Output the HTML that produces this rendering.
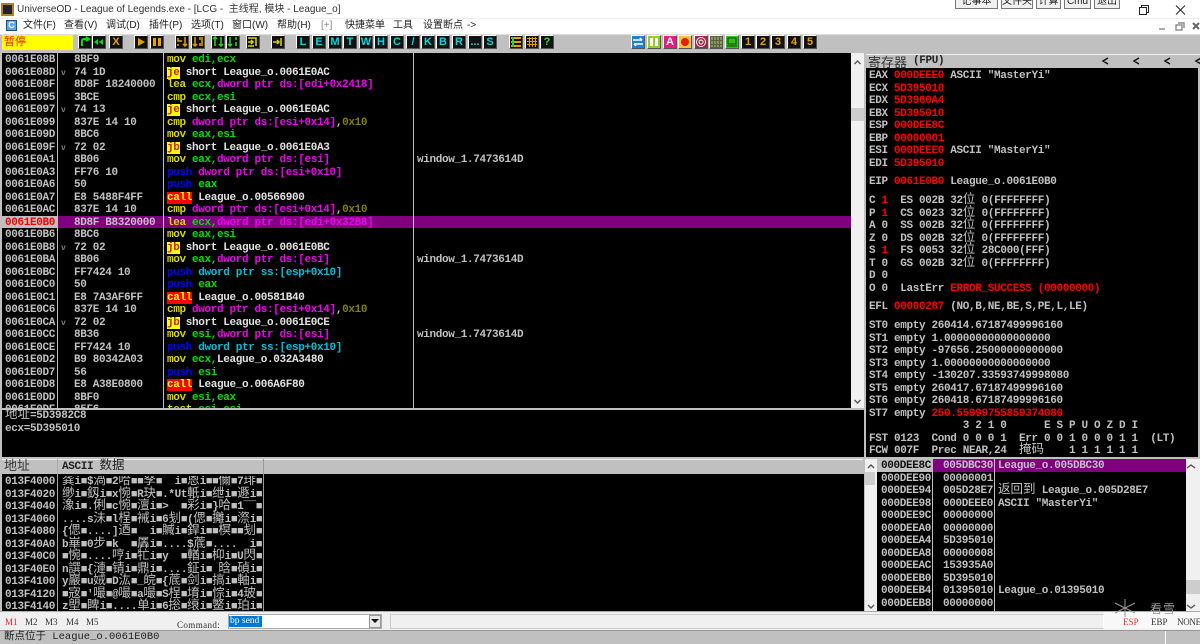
<!DOCTYPE html>
<html><head><meta charset="utf-8"><style>
*{margin:0;padding:0;box-sizing:border-box}
html,body{width:1200px;height:644px;overflow:hidden;background:#c0c0c0}
body{position:relative;font-family:"Liberation Sans","Noto Sans CJK SC",sans-serif}
div{position:absolute}
.t{font:bold 11px/12.5px "Liberation Mono","Noto Sans CJK SC",monospace;letter-spacing:-.35px;color:#c0c0c0;white-space:pre}
.k{background:#000}
.m{color:#d8d800}.g{color:#00e000}.p{color:#f000f0}.o{color:#808000}.u{color:#0000ff}.c{color:#00c0d8}.w{color:#e0e0e0}.r{color:#ff0000}
.j{background:#ffff00;color:#d02000}.a{background:#ff0000;color:#ffff00}
u{text-decoration:none;font-weight:normal;font-size:12.5px;line-height:10px;letter-spacing:0}
.hd{font:11px/14px "Liberation Mono","Noto Sans CJK SC",monospace;color:#222}
.mi{font:10px/15px "Liberation Sans","Noto Sans CJK SC",sans-serif;color:#222;top:18px;white-space:pre}
.b{top:35px;width:14px;height:14px;background:#111;border:1px solid;border-color:#fff #555 #555 #fff;font:bold 11px/12px "Liberation Sans",sans-serif;text-align:center;color:#00d8e0}
.b svg{position:absolute;left:0;top:0}
.y{color:#e8a000}
.v{width:1px;background:#c0c0c0}
.sb{background:#f0f0f0}
.tb{top:-6px;height:15px;background:#f0f0f0;border:1px solid #777;font:10px/14px "Liberation Sans","Noto Sans CJK SC",sans-serif;color:#222;text-align:center;overflow:hidden}
.mm{top:616px;font:9px/12px "Liberation Serif",serif;color:#333;white-space:nowrap}
</style></head><body>

<div style="left:0;top:0;width:1200px;height:18px;background:#fff"></div>
<div style="left:1px;top:3px;width:13px;height:13px;background:#222;border:2px solid #b08030"></div>
<div style="left:17px;top:2px;font-size:10px;line-height:15px;color:#333;white-space:pre">UniverseOD - League of Legends.exe - [LCG -  主线程, 模块 - League_o]</div>
<div class="tb" style="left:955px;width:43px">记事本</div>
<div class="tb" style="left:1001px;width:32px">文件夹</div>
<div class="tb" style="left:1036px;width:25px">计算</div>
<div class="tb" style="left:1064px;width:27px">Cmd</div>
<div class="tb" style="left:1094px;width:26px">退出</div>
<svg style="position:absolute;left:1138px;top:3px" width="50" height="14" fill="none" stroke="#222"><rect x="1.5" y="4.5" width="7" height="7"/><path d="M3.5 4V2.5H10.5V9.5H9"/><path d="M38 2.5L47 11.5M47 2.5L38 11.5"/></svg>

<div style="left:0;top:18px;width:1200px;height:16px;background:#fff;border-top:1px solid #eee"></div>
<div style="left:6px;top:20px;width:11px;height:11px;background:#5aa8e8;border:1px solid #205080;color:#fff;font:bold 9px/9px 'Liberation Sans';text-align:center">C</div>
<div class="mi" style="left:23px">文件(F)</div><div class="mi" style="left:64px">查看(V)</div><div class="mi" style="left:106px">调试(D)</div><div class="mi" style="left:149px">插件(P)</div><div class="mi" style="left:191px">选项(T)</div><div class="mi" style="left:232px">窗口(W)</div><div class="mi" style="left:277px">帮助(H)</div><div class="mi" style="left:321px;color:#888">[+]</div><div class="mi" style="left:345px">快捷菜单</div><div class="mi" style="left:393px">工具</div><div class="mi" style="left:423px">设置断点</div><div class="mi" style="left:467px">-&gt;</div>
<svg style="position:absolute;left:1156px;top:20px" width="44" height="13" fill="none" stroke="#888" stroke-width="1.4"><path d="M3 9H9"/><rect x="20" y="5" width="6" height="5"/><path d="M22 3H28V8"/><path d="M37 3L43 9M43 3L37 9" stroke="#666" stroke-width="2"/></svg>

<div style="left:0;top:34px;width:1200px;height:17px;background:#c0c0c0;border-top:1px solid #ddd"></div>
<div style="left:2px;top:35px;width:71px;height:15px;background:#ffff00;color:#e02000;font-size:11px;line-height:15px;padding-left:2px">暂停</div>

<div class="b" style="left:78px"><svg width="12" height="12" fill="none" stroke="#00e000" stroke-width="2"><path d="M3 10V5Q3 3 5 3H9M7 1L10 3L7 5"/></svg></div>
<div class="b" style="left:92px"><svg width="12" height="12" fill="#00e000"><path d="M1 6L5 3V9ZM6 6L10 3V9Z"/></svg></div>
<div class="b" style="left:109px;color:#e8a000">X</div>
<div class="b" style="left:134px"><svg width="12" height="12" fill="#e8a000"><path d="M3 2L10 6L3 10Z"/></svg></div>
<div class="b" style="left:150px"><svg width="12" height="12" fill="#e8a000"><path d="M2 2H5V10H2ZM7 2H10V10H7Z"/></svg></div>
<div class="b" style="left:175px"><svg width="12" height="12" fill="none" stroke="#e8a000" stroke-width="1.5"><path d="M2 2V5H6M2 8V10M9 1V10M7 8L9 10L11 8"/></svg></div>
<div class="b" style="left:191px"><svg width="12" height="12" fill="none" stroke="#e8a000" stroke-width="1.5"><path d="M3 1V10M1 8L3 10L5 8M8 1V4M8 7V10M10 1V10"/></svg></div>
<div class="b" style="left:211px"><svg width="12" height="12" fill="none" stroke="#30d030" stroke-width="1.5"><path d="M3 1V10M1 3L3 1L5 3M9 1V10M7 8L9 10L11 8"/></svg></div>
<div class="b" style="left:226px"><svg width="12" height="12" fill="none" stroke="#30d030" stroke-width="1.5"><path d="M3 1V10M1 8L3 10L5 8M9 1V4M9 6V10"/></svg></div>
<div class="b" style="left:246px"><svg width="12" height="12" fill="none" stroke="#d8d800" stroke-width="1.5"><path d="M1 2H9V10M1 6H6M4 4L6 6L4 8M1 10H7"/></svg></div>
<div class="b" style="left:271px"><svg width="12" height="12" fill="none" stroke="#d8d800" stroke-width="1.5"><path d="M9 2V10M1 6H7M5 4L7 6L5 8"/></svg></div>

<div class="b" style="left:296px">L</div><div class="b" style="left:312px">E</div><div class="b" style="left:328px">M</div><div class="b" style="left:343px">T</div><div class="b" style="left:359px">W</div><div class="b" style="left:374px">H</div><div class="b" style="left:390px">C</div><div class="b" style="left:406px">/</div><div class="b" style="left:421px">K</div><div class="b" style="left:436px">B</div><div class="b" style="left:452px">R</div><div class="b" style="left:468px">...</div><div class="b" style="left:483px">S</div>

<div class="b" style="left:509px"><svg width="12" height="12" fill="none" stroke-width="2"><path d="M1 2H11M1 6H11M1 10H11" stroke="#e8a000"/><path d="M3 1V11" stroke="#30d030"/></svg></div>
<div class="b" style="left:525px"><svg width="12" height="12" fill="none" stroke="#e8a000"><path d="M1 2.5H11M1 5.5H11M1 8.5H11M3.5 1V11M6.5 1V11M9.5 1V11"/></svg></div>
<div class="b" style="left:540px;color:#30e030">?</div>

<div class="b" style="left:631px;background:#2080d0"><svg width="12" height="12" fill="none" stroke="#fff" stroke-width="1.5"><path d="M1 4H10M8 2L10 4M11 8H2M4 10L2 8"/></svg></div>
<div class="b" style="left:647px;background:#90d020"><svg width="12" height="12" fill="#fff"><path d="M2 2H5V10H2ZM7 2H10V10H7Z"/></svg></div>
<div class="b" style="left:663px;background:#f01880;color:#fff">A</div>
<div class="b" style="left:678px;background:#f8c040"><svg width="12" height="12"><circle cx="6" cy="6" r="4" fill="#e02010"/></svg></div>
<div class="b" style="left:694px;background:#b02040"><svg width="12" height="12" fill="none" stroke="#fff"><circle cx="6" cy="6" r="4.5"/><circle cx="6" cy="6" r="2"/></svg></div>
<div class="b" style="left:709px;background:#606040"><svg width="12" height="12" fill="none" stroke="#a0d080"><path d="M2 1V11M5 1V11M8 1V11M11 1V11" stroke-dasharray="3 1"/></svg></div>
<div class="b" style="left:725px;background:#30c010"><svg width="12" height="12" fill="none" stroke="#104010"><rect x="2" y="2" width="8" height="6"/><path d="M1 10H11"/></svg></div>
<div class="b y" style="left:741px">1</div><div class="b y" style="left:756px">2</div><div class="b y" style="left:771px">3</div><div class="b y" style="left:787px">4</div><div class="b y" style="left:803px">5</div>

<!-- CPU pane -->
<div class="k" style="left:2px;top:53px;width:849px;height:355px;overflow:hidden">
<div style="left:0;top:162.5px;width:56px;height:12.5px;background:#c0c0c0"></div>
<div style="left:56px;top:162.5px;width:793px;height:12.5px;background:#800080"></div>
<div class="v" style="left:55px;top:0;height:355px"></div>
<div class="v" style="left:161px;top:0;height:355px"></div>
<div class="v" style="left:411px;top:0;height:355px"></div>
<div class="t" style="left:3px;top:1px">0061E08B
0061E08D
0061E08F
0061E095
0061E097
0061E099
0061E09D
0061E09F
0061E0A1
0061E0A3
0061E0A6
0061E0A7
0061E0AC
<span class="r">0061E0B0</span>
0061E0B6
0061E0B8
0061E0BA
0061E0BC
0061E0C0
0061E0C1
0061E0C6
0061E0CA
0061E0CC
0061E0CE
0061E0D2
0061E0D7
0061E0D8
0061E0DD
0061E0DF</div>
<div class="t" style="left:72px;top:1px">8BF9
74 1D
8D8F 18240000
3BCE
74 13
837E 14 10
8BC6
72 02
8B06
FF76 10
50
E8 5488F4FF
837E 14 10
8D8F B8320000
8BC6
72 02
8B06
FF7424 10
50
E8 7A3AF6FF
837E 14 10
72 02
8B36
FF7424 10
B9 80342A03
56
E8 A38E0800
8BF0
85F6</div>
<div class="t" style="left:165px;top:1px"><span class="m">mov</span> <span class="g">edi,ecx</span>
<span class="j">je</span> <span class="w">short League_o.0061E0AC</span>
<span class="m">lea</span> <span class="g">ecx,</span><span class="p">dword ptr ds:[edi+0x2418]</span>
<span class="m">cmp</span> <span class="g">ecx,esi</span>
<span class="j">je</span> <span class="w">short League_o.0061E0AC</span>
<span class="m">cmp</span> <span class="p">dword ptr ds:[esi+0x14]</span>,<span class="o">0x10</span>
<span class="m">mov</span> <span class="g">eax,esi</span>
<span class="j">jb</span> <span class="w">short League_o.0061E0A3</span>
<span class="m">mov</span> <span class="g">eax,</span><span class="p">dword ptr ds:[esi]</span>
<span class="u">push</span> <span class="p">dword ptr ds:[esi+0x10]</span>
<span class="u">push</span> <span class="g">eax</span>
<span class="a">call</span> <span class="w">League_o.00566900</span>
<span class="m">cmp</span> <span class="p">dword ptr ds:[esi+0x14]</span>,<span class="o">0x10</span>
<span class="m">lea</span> <span class="g">ecx,</span><span class="p">dword ptr ds:[edi+0x32B8]</span>
<span class="m">mov</span> <span class="g">eax,esi</span>
<span class="j">jb</span> <span class="w">short League_o.0061E0BC</span>
<span class="m">mov</span> <span class="g">eax,</span><span class="p">dword ptr ds:[esi]</span>
<span class="u">push</span> <span class="c">dword ptr ss:[esp+0x10]</span>
<span class="u">push</span> <span class="g">eax</span>
<span class="a">call</span> <span class="w">League_o.00581B40</span>
<span class="m">cmp</span> <span class="p">dword ptr ds:[esi+0x14]</span>,<span class="o">0x10</span>
<span class="j">jb</span> <span class="w">short League_o.0061E0CE</span>
<span class="m">mov</span> <span class="g">esi,</span><span class="p">dword ptr ds:[esi]</span>
<span class="u">push</span> <span class="c">dword ptr ss:[esp+0x10]</span>
<span class="m">mov</span> <span class="g">ecx,</span><span class="w">League_o.032A3480</span>
<span class="u">push</span> <span class="g">esi</span>
<span class="a">call</span> <span class="w">League_o.006A6F80</span>
<span class="m">mov</span> <span class="g">esi,eax</span>
<span class="m">test</span> <span class="g">esi,esi</span></div>
<div class="t" style="left:415px;top:101px">window_1.7473614D</div>
<div class="t" style="left:415px;top:201px">window_1.7473614D</div>
<div class="t" style="left:415px;top:276px">window_1.7473614D</div>
<div class="t" style="left:59px;top:15px;color:#808080;font-size:8px">v</div>
<div class="t" style="left:59px;top:52px;color:#808080;font-size:8px">v</div>
<div class="t" style="left:59px;top:90px;color:#808080;font-size:8px">v</div>
<div class="t" style="left:59px;top:190px;color:#808080;font-size:8px">v</div>
<div class="t" style="left:59px;top:265px;color:#808080;font-size:8px">v</div>
</div>
<div class="sb" style="left:851px;top:53px;width:13px;height:355px"></div>
<div style="left:851px;top:108px;width:13px;height:13px;background:#cdcdcd"></div>
<svg style="position:absolute;left:851px;top:53px" width="13" height="355" fill="none" stroke="#555" stroke-width="1.4"><path d="M3.5 11L6.5 8L9.5 11M3.5 347L6.5 350L9.5 347"/></svg>

<!-- Info pane -->
<div class="k" style="left:2px;top:410px;width:862px;height:47px"></div>
<div class="t" style="left:5px;top:410px"><u>地址</u>=5D3982C8
ecx=5D395010</div>

<!-- Dump -->
<div class="hd" style="left:2px;top:459px;width:861px;height:15px;background:#c0c0c0;border-top:1px solid #eee"></div>
<div class="hd" style="left:4px;top:459px;font-size:13px;line-height:15px;color:#333">地址</div>
<div class="t" style="left:62px;top:460px;color:#222;line-height:14px">ASCII <u style="font-size:12.5px">数据</u></div>
<div class="k" style="left:2px;top:474px;width:862px;height:137px"></div>
<div class="v" style="left:57px;top:459px;height:152px;background:#aaa"></div>
<div class="v" style="left:263px;top:459px;height:152px;background:#999"></div>
<div class="t" style="left:5px;top:476px">013F4000
013F4020
013F4040
013F4060
013F4080
013F40A0
013F40C0
013F40E0
013F4100
013F4120
013F4140</div>
<div class="t" style="left:62px;top:476px;width:200px;height:135px;overflow:hidden"><u>龚</u>i■$<u>渦</u>■2<u>哈</u>■■<u>孥</u>■  i■<u>恩</u>i■■<u>儞</u>■7<u>琲</u>■
<u>缈</u>i■<u>釼</u>i■x<u>惋</u>■R<u>玦</u>■.*Ut<u>軝</u>i■<u>绁</u>i■<u>遯</u>i■
<u>潒</u>i■.<u>俐</u>■c<u>惋</u>■<u>澶</u>i■&gt;  ■<u>彩</u>i■}<u>哈</u>■1¯¯■
....s<u>沬</u>■l<u>桯</u>■<u>裓</u>i■6<u>刬</u>■(<u>偲</u>■<u>攡</u>i■<u>漈</u>i■
{<u>偲</u>■....]<u>迺</u>■  i■<u>贓</u>i■<u>銲</u>i■■<u>榠</u>■■<u>刬</u>■
b<u>崋</u>■0<u>步</u>■k  ■<u>羼</u>i■....$<u>菧</u>■....  i■
■<u>惋</u>■....<u>哼</u>i■<u>牤</u>i■y  ■<u>輶</u>i■<u>枊</u>i■U<u>閃</u>■
n<u>譔</u>■{<u>漣</u>■<u>锖</u>i■<u>鼎</u>i■....<u>鉦</u>i■ <u>晗</u>■<u>碵</u>i■
y<u>巖</u>■u<u>娀</u>■D<u>汯</u>■_<u>皖</u>■{<u>菧</u>■<u>剑</u>i■<u>搞</u>i■<u>軸</u>i■
■<u>宼</u>■'<u>嘬</u>■@<u>嘬</u>■a<u>嘬</u>■S<u>桯</u>■<u>堉</u>i■<u>悰</u>i■4<u>玻</u>■
z<u>塱</u>■<u>睥</u>i■....<u>单</u>i■6<u>捴</u>■<u>缞</u>i■<u>鳘</u>i■<u>珀</u>i■</div>

<!-- Registers -->
<div style="left:866px;top:54px;width:334px;height:15px;background:#c0c0c0;border-top:1px solid #eee"></div>
<div style="left:868px;top:54px;font:13px/15px 'Noto Sans CJK SC',sans-serif;color:#333">寄存器</div>
<div class="t" style="left:913px;top:55px;color:#222">(FPU)</div>
<svg style="position:absolute;left:1100px;top:55px" width="100" height="12" fill="none" stroke="#111" stroke-width="1.5"><path d="M8 3L3 6L8 9M39 3L34 6L39 9M70 3L65 6L70 9M101 3L96 6L101 9"/></svg>
<div class="k" style="left:866px;top:68px;width:332px;height:389px"></div>
<div class="t" style="left:869px;top:70px">EAX <span class="r">000DEEE0</span> ASCII "MasterYi"
ECX <span class="r">5D395010</span>
EDX <span class="r">5D3960A4</span>
EBX <span class="r">5D395010</span>
ESP <span class="r">000DEE8C</span>
EBP <span class="r">00000001</span>
ESI <span class="r">000DEEE0</span> ASCII "MasterYi"
EDI <span class="r">5D395010</span></div>
<div class="t" style="left:869px;top:176px">EIP <span class="r">0061E0B0</span> League_o.0061E0B0</div>
<div class="t" style="left:869px;top:195px">C <span class="r">1</span>  ES 002B 32<u>位</u> 0(FFFFFFFF)
P <span class="r">1</span>  CS 0023 32<u>位</u> 0(FFFFFFFF)
A 0  SS 002B 32<u>位</u> 0(FFFFFFFF)
Z 0  DS 002B 32<u>位</u> 0(FFFFFFFF)
S <span class="r">1</span>  FS 0053 32<u>位</u> 28C000(FFF)
T 0  GS 002B 32<u>位</u> 0(FFFFFFFF)
D 0
O 0  LastErr <span class="r">ERROR_SUCCESS (00000000)</span></div>
<div class="t" style="left:869px;top:301px">EFL <span class="r">00000287</span> (NO,B,NE,BE,S,PE,L,LE)</div>
<div class="t" style="left:869px;top:320px">ST0 empty 260414.67187499996160
ST1 empty 1.00000000000000000
ST2 empty -97656.25000000000000
ST3 empty 1.00000000000000000
ST4 empty -130207.33593749998080
ST5 empty 260417.67187499996160
ST6 empty 260418.67187499996160
ST7 empty <span class="r">250.55999755859374080</span>
               3 2 1 0      E S P U O Z D I
FST 0123  Cond 0 0 0 1  Err 0 0 1 0 0 0 1 1  (LT)
FCW 007F  Prec NEAR,24  <u>掩码</u>    1 1 1 1 1 1</div>

<!-- Stack -->
<div class="sb" style="left:865px;top:459px;width:12px;height:152px"></div>
<div style="left:865px;top:472px;width:10px;height:13px;background:#cdcdcd"></div>
<div class="sb" style="left:1186px;top:459px;width:14px;height:152px"></div>
<div style="left:1186px;top:580px;width:14px;height:14px;background:#cdcdcd"></div>
<svg style="position:absolute;left:865px;top:459px" width="335" height="152" fill="none" stroke="#555" stroke-width="1.4"><path d="M3 9L6 6L9 9M3 146L6 149L9 146M322 9L326 6L330 9M322 146L326 149L330 146"/></svg>
<div class="k" style="left:877px;top:459px;width:309px;height:152px;overflow:hidden">
<div style="left:0;top:0;width:56px;height:12.5px;background:#c0c0c0"></div>
<div style="left:56px;top:0;width:253px;height:12.5px;background:#800080"></div>
<div class="v" style="left:55px;top:0;height:152px"></div>
<div class="v" style="left:117px;top:0;height:152px"></div>
<div class="t" style="left:4px;top:1px"><span style="color:#111">000DEE8C</span>
000DEE90
000DEE94
000DEE98
000DEE9C
000DEEA0
000DEEA4
000DEEA8
000DEEAC
000DEEB0
000DEEB4
000DEEB8</div>
<div class="t" style="left:66px;top:1px">005DBC30
00000001
005D28E7
000DEEE0
00000000
00000000
5D395010
00000008
153935A0
5D395010
01395010
00000000</div>
<div class="t" style="left:121px;top:1px">League_o.005DBC30

<u>返回到</u> League_o.005D28E7
ASCII "MasterYi"






League_o.01395010</div>
</div>

<!-- Command bar -->
<div style="left:0;top:611px;width:1200px;height:20px;background:#f0f0f0;border-top:1px solid #aaa;border-bottom:1px solid #999"></div>
<div class="mm" style="left:5px;color:#f02020">M1</div><div class="mm" style="left:25px">M2</div><div class="mm" style="left:45px">M3</div><div class="mm" style="left:66px">M4</div><div class="mm" style="left:86px">M5</div>
<div class="mm" style="left:177px;top:619px;letter-spacing:.4px">Command:</div>
<div style="left:228px;top:614px;width:154px;height:15px;background:#fff;border:1px solid #aaa"></div>
<div style="left:229px;top:616px;width:33px;height:11px;background:#0078d7;color:#fff;font:9.5px/11px 'Liberation Serif',serif;white-space:nowrap;overflow:hidden;padding-left:1px">bp send</div>
<div style="left:369px;top:615px;width:12px;height:13px;background:#e8e8e8;border:1px solid #999"></div>
<svg style="position:absolute;left:371px;top:619px" width="8" height="5"><path d="M0 0H8L4 4Z" fill="#111"/></svg>
<div style="left:390px;top:614px;width:714px;height:15px;background:#f0f0f0;border:1px solid #ccc;border-right-color:#fff"></div>
<div style="left:1104px;top:612px;width:96px;height:17px;background:#f8f8f8"></div>
<svg style="position:absolute;left:1112px;top:598px" width="26" height="20" fill="none" stroke="#999"><path d="M13 1V19M3 5L23 15M3 15L23 5"/></svg>
<div style="left:1150px;top:602px;color:#999;font:12px/13px 'Noto Sans CJK SC',sans-serif;letter-spacing:1px">看雪</div>
<div class="mm" style="left:1123px;color:#f03030">ESP</div><div class="mm" style="left:1151px">EBP</div><div class="mm" style="left:1177px;letter-spacing:-.3px">NONE</div>

<!-- Status -->
<div style="left:0;top:631px;width:1200px;height:13px;background:#c0c0c0"></div>
<div style="left:4px;top:631px;font:10.5px/13px 'Liberation Mono','Noto Sans CJK SC',monospace;color:#222;white-space:pre">断点位于 League_o.0061E0B0</div>
<div style="left:1165px;top:631px;width:1px;height:13px;background:#fff"></div>
</body></html>
